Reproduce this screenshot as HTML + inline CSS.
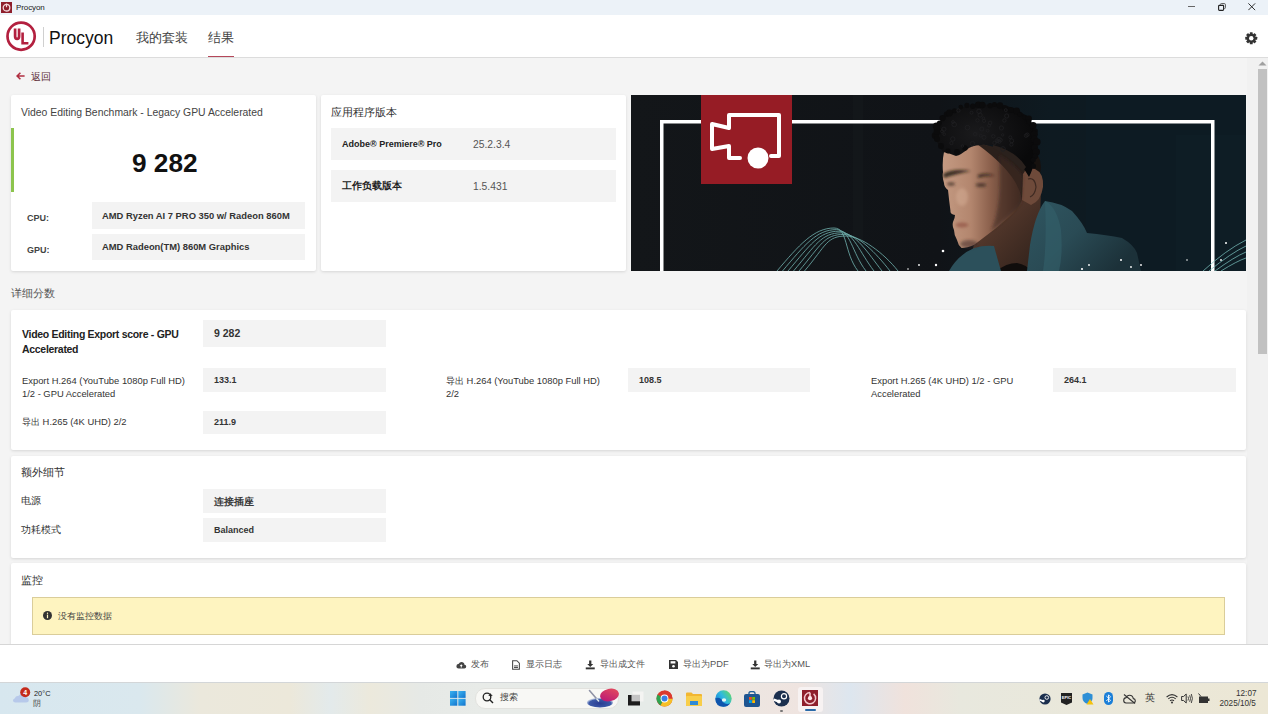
<!DOCTYPE html>
<html><head><meta charset="utf-8">
<style>
*{margin:0;padding:0;box-sizing:border-box}
html,body{width:1268px;height:714px;overflow:hidden;background:#f4f4f4;font-family:"Liberation Sans",sans-serif;color:#333}
.a{position:absolute;white-space:nowrap}
#titlebar{position:absolute;left:0;top:0;width:1268px;height:15px;background:#ecf2f8}
#header{position:absolute;left:0;top:15px;width:1268px;height:43px;background:#fff;border-bottom:1px solid #dcdcdc}
.card{position:absolute;background:#fff;border-radius:2px;box-shadow:0 1px 3px rgba(0,0,0,0.12)}
.vbox{position:absolute;background:#f3f3f3}
.t{position:absolute;white-space:nowrap;line-height:1}
#footer{position:absolute;left:0;top:644px;width:1268px;height:39px;background:#fff;border-top:1px solid #d6d6d6}
#taskbar{position:absolute;left:0;top:682px;width:1268px;height:32px;background:linear-gradient(90deg,#d7e7ef 0px,#dae8ee 140px,#ebe8dc 200px,#ece8da 290px,#e3eaeb 330px,#ece9dc 370px,#e6e9e6 420px,#e8ebe8 480px,#e6ebe8 650px,#ece7e2 720px,#efe4e0 800px,#dde6ef 850px,#f0e2dc 905px,#e8e8de 960px,#ece7d5 1268px);border-top:1px solid #d3d6d8}
</style></head><body>

<div id="titlebar">
  <svg class="a" style="left:1px;top:2px" width="11" height="11" viewBox="0 0 11 11"><rect width="11" height="11" fill="#8e1f2c"/><circle cx="5.5" cy="5.7" r="3.3" fill="none" stroke="#f3d9dc" stroke-width="1.3"/><rect x="4.9" y="1.6" width="1.2" height="3.6" fill="#f3d9dc"/></svg>
  <div class="t" style="left:16px;top:3.7px;font-size:8px;color:#222;letter-spacing:-0.1px">Procyon</div>
  <div class="a" style="left:1188px;top:6px;width:7px;height:1px;background:#666"></div>
  <svg class="a" style="left:1218px;top:3px" width="8" height="8" viewBox="0 0 8 8"><rect x="0.6" y="2.4" width="5" height="5" rx="0.8" fill="none" stroke="#222" stroke-width="1.1"/><path d="M2.4 1.8V1.5Q2.4 0.6 3.3 0.6H6.4Q7.4 0.6 7.4 1.6V4.7Q7.4 5.6 6.4 5.6" fill="none" stroke="#444" stroke-width="0.9"/></svg>
  <svg class="a" style="left:1248px;top:3px" width="7.5" height="7.5" viewBox="0 0 8 8"><path d="M0.4 0.4L7.6 7.6M7.6 0.4L0.4 7.6" stroke="#222" stroke-width="1"/></svg>
</div>

<div id="header">
  <svg class="a" style="left:5px;top:5px" width="32" height="32" viewBox="0 0 32 32"><circle cx="16.1" cy="16.2" r="13.6" fill="none" stroke="#b3203f" stroke-width="2.7"/><path d="M10.1 8.4V16.3Q10.1 18.9 12.1 18.9Q14.1 18.9 14.1 16.3V8.4" fill="none" stroke="#b3203f" stroke-width="2.7"/><path d="M17.6 12.6V23.2H23.4" fill="none" stroke="#b3203f" stroke-width="2.6"/></svg>
  <div class="a" style="left:43px;top:12px;width:1px;height:20px;background:#d0d0d0"></div>
  <div class="t" style="left:49px;top:14.5px;font-size:17.5px;color:#111">Procyon</div>
  <div class="t" style="left:136px;top:17px;font-size:12.5px;color:#444">我的套装</div>
  <div class="t" style="left:208px;top:17px;font-size:12.5px;color:#444">结果</div>
  <div class="a" style="left:208px;top:40.5px;width:26px;height:1.6px;background:#b5475a"></div>
  <svg class="a" style="left:1245px;top:17px" width="12.5" height="12.5" viewBox="0 0 14 14"><g fill="#333"><circle cx="7" cy="7" r="5"/><g id="th"><rect x="5.4" y="0.3" width="3.2" height="3" rx="0.4"/></g><use href="#th" transform="rotate(45 7 7)"/><use href="#th" transform="rotate(90 7 7)"/><use href="#th" transform="rotate(135 7 7)"/><use href="#th" transform="rotate(180 7 7)"/><use href="#th" transform="rotate(225 7 7)"/><use href="#th" transform="rotate(270 7 7)"/><use href="#th" transform="rotate(315 7 7)"/></g><circle cx="7" cy="7" r="2.5" fill="#fff"/></svg>
</div>

<!-- scrollbar -->
<div class="a" style="left:1247px;top:58px;width:21px;height:586px;background:#f1f1f1"></div>
<svg class="a" style="left:1258px;top:61px" width="9" height="5" viewBox="0 0 9 5"><path d="M0.5 4.5L4.5 0.5L8.5 4.5Z" fill="#a0a0a0"/></svg>
<div class="a" style="left:1258px;top:69px;width:9px;height:285px;background:#c1c1c1"></div>

<!-- back -->
<svg class="a" style="left:16px;top:72px" width="9" height="8" viewBox="0 0 9 8"><path d="M4.4 0.7L1.1 4L4.4 7.3M1.3 4H8.6" fill="none" stroke="#b02e40" stroke-width="1.6"/></svg>
<div class="t" style="left:31px;top:72px;font-size:9.6px;color:#5e2f38">返回</div>

<!-- card 1 -->
<div class="card" style="left:11px;top:95px;width:305px;height:176px">
  <div class="t" style="left:10px;top:13px;font-size:10.4px;color:#444">Video Editing Benchmark - Legacy GPU Accelerated</div>
  <div class="a" style="left:0;top:33px;width:3px;height:64px;background:#8cc44d"></div>
  <div class="t" style="left:121px;top:54.5px;font-size:26.2px;font-weight:bold;color:#111">9 282</div>
  <div class="t" style="left:16px;top:119px;font-size:9px;font-weight:bold;color:#444">CPU:</div>
  <div class="t" style="left:16px;top:151px;font-size:9px;font-weight:bold;color:#444">GPU:</div>
  <div class="vbox" style="left:81px;top:107px;width:213px;height:27px"></div>
  <div class="vbox" style="left:81px;top:139px;width:213px;height:26px"></div>
  <div class="t" style="left:91px;top:116px;font-size:9.4px;font-weight:bold;color:#333">AMD Ryzen AI 7 PRO 350 w/ Radeon 860M</div>
  <div class="t" style="left:91px;top:147px;font-size:9.4px;font-weight:bold;color:#333">AMD Radeon(TM) 860M Graphics</div>
</div>

<!-- card 2 -->
<div class="card" style="left:321px;top:95px;width:305px;height:176px">
  <div class="t" style="left:10px;top:12px;font-size:11px;color:#333">应用程序版本</div>
  <div class="vbox" style="left:10px;top:33px;width:285px;height:32px"></div>
  <div class="vbox" style="left:10px;top:75px;width:285px;height:32px"></div>
  <div class="t" style="left:21px;top:45px;font-size:9px;font-weight:bold;color:#222">Adobe® Premiere® Pro</div>
  <div class="t" style="left:152px;top:45px;font-size:10.3px;color:#555">25.2.3.4</div>
  <div class="t" style="left:21px;top:86px;font-size:9.6px;font-weight:bold;color:#222">工作负载版本</div>
  <div class="t" style="left:152px;top:87px;font-size:10.3px;color:#555">1.5.431</div>
</div>

<!-- banner -->
<svg class="a" style="left:631px;top:95px" width="615" height="176" viewBox="0 0 615 176">
<defs>
<linearGradient id="bg" x1="0" y1="0" x2="1" y2="0"><stop offset="0" stop-color="#131619"/><stop offset="0.5" stop-color="#101317"/><stop offset="0.68" stop-color="#0e1a21"/><stop offset="1" stop-color="#0c1a21"/></linearGradient>
<linearGradient id="skin" x1="0" y1="0" x2="1" y2="0"><stop offset="0" stop-color="#c49a82"/><stop offset="0.35" stop-color="#b3866e"/><stop offset="0.6" stop-color="#8a5f4b"/><stop offset="0.85" stop-color="#5a3d30"/><stop offset="1" stop-color="#3a2820"/></linearGradient>
<linearGradient id="hood" x1="0" y1="0" x2="1" y2="0.6"><stop offset="0" stop-color="#2f5661"/><stop offset="0.5" stop-color="#2a4b55"/><stop offset="1" stop-color="#1c3139"/></linearGradient>
<filter id="soft" x="-20%" y="-20%" width="140%" height="140%"><feGaussianBlur stdDeviation="1.6"/></filter><linearGradient id="neckg" x1="0" y1="0" x2="1" y2="1"><stop offset="0" stop-color="#6a4636"/><stop offset="1" stop-color="#2e201a"/></linearGradient><radialGradient id="hairg" cx="0.4" cy="0.4" r="0.6"><stop offset="0" stop-color="#1a1a1c"/><stop offset="1" stop-color="#09090a"/></radialGradient>
</defs>
<rect width="615" height="176" fill="url(#bg)"/>
<rect x="222" y="0" width="10" height="176" fill="#15191c" opacity="0.6"/>
<rect x="455" y="0" width="160" height="176" fill="#0d1b23"/>
<rect x="545" y="40" width="70" height="136" fill="#101e26" opacity="0.7"/>
<!-- frame -->
<rect x="29" y="25" width="3.5" height="151" fill="#fff"/>
<rect x="29" y="25" width="554" height="3.5" fill="#fff"/>
<rect x="580" y="25" width="3.5" height="151" fill="#fff"/>
<!-- waves -->
<g fill="none" stroke="#7cc4c0" stroke-width="0.8" opacity="0.9">
<path d="M146.0 176 C168.0 150 183.0 133.0 203.0 133.0 C217.0 133.0 213.0 158 227.0 176"/>
<path d="M151.5 176 C173.5 150 185.5 134.6 205.5 134.6 C219.5 134.6 221.0 158 235.0 176"/>
<path d="M157.0 176 C179.0 150 188.0 136.2 208.0 136.2 C222.0 136.2 229.0 158 243.0 176"/>
<path d="M162.5 176 C184.5 150 190.5 137.8 210.5 137.8 C224.5 137.8 237.0 158 251.0 176"/>
<path d="M168.0 176 C190.0 150 193.0 139.4 213.0 139.4 C227.0 139.4 245.0 158 259.0 176"/>
<path d="M173.5 176 C195.5 150 195.5 141.0 215.5 141.0 C229.5 141.0 253.0 158 267.0 176"/>
<path d="M572 176 Q595 155 615 145"/>
<path d="M578 176 Q600 158 615 151"/>
<path d="M584 176 Q603 162 615 157"/>
<path d="M590 176 Q606 166 615 163"/>
</g>
<!-- neck -->
<path d="M335 176 L343 150 L385 110 L393 98 L410 96 L408 150 L402 176 Z" fill="url(#neckg)"/>
<path d="M366 176 Q375 168 386 168 Q396 170 400 176 Z" fill="#100d0c"/>
<!-- hoodie -->
<path d="M318 176 Q327 160 343 153 Q353 150 363 151 Q366 162 370 176 Z" fill="#2c505b"/>
<path d="M396 176 L399 150 Q404 119 414 106 Q430 108 441 116 Q452 128 456 138 Q476 140 491 143 Q503 150 506 158 L510 176 Z" fill="url(#hood)"/>
<path d="M414 106 Q426 112 430 135 Q432 160 428 176 L412 176 Q416 150 414 106 Z" fill="#33606b" opacity="0.6"/>
<!-- face -->
<path d="M313 57 Q330 50 350 48 Q375 58 392 79 L391 105 L385 116 Q365 134 343 150 Q336 153 330.6 153 Q327 150 326 145 Q323 140 323 135 Q321 131 322 127 Q324 123 324 120 Q319 119 319.5 116 Q318 105 317 95 Q313 92 313 88 Q311 82 312 77 Q311 66 313 57 Z" fill="url(#skin)"/>
<ellipse cx="401" cy="72" rx="9" ry="15" fill="#17120f"/>
<path d="M346 49 Q372 50 396 70 L400 84 L391 104 Q386 78 346 49Z" fill="#2b201b"/>
<path d="M392 79 Q396 72 404 74 Q413 78 412 92 Q410 106 400 110 L391 105 Z" fill="#6e4a3a"/>
<path d="M397 84 Q404 82 405 92 Q404 100 399 102" stroke="#3e2a22" stroke-width="1.2" fill="none"/>
<!-- face shading -->
<g filter="url(#soft)">
<path d="M368 60 Q385 70 392 82 L390 108 Q375 125 360 136 Q372 110 368 60 Z" fill="#3e2a22" opacity="0.55"/>
<path d="M312 79 Q322 73 340 76 Q328 78 313 83Z" fill="#22160f" opacity="0.85"/>
<path d="M347 80 Q356 77 364 81 Q356 80 347 83Z" fill="#22160f" opacity="0.8"/>
<ellipse cx="320" cy="89" rx="4" ry="1.7" fill="#3a2820" opacity="0.75"/>
<ellipse cx="350" cy="90" rx="5.5" ry="2" fill="#3a2820" opacity="0.75"/>
<ellipse cx="331" cy="102" rx="6" ry="9" fill="#e2bca4" opacity="0.35"/>
<ellipse cx="331" cy="130" rx="6.5" ry="2.6" fill="#9a5e4e" opacity="0.9"/>
<ellipse cx="338" cy="149" rx="9" ry="4" fill="#3a2620" opacity="0.5"/>
</g>
<!-- hair -->
<path d="M304 40 Q305 24 322 15 Q345 8 372 10 Q395 15 402 30 Q407 45 404 62 Q402 75 398 82 Q392 72 390 70 Q378 56 362 50 Q345 49 338 53 Q330 60 325 61 Q318 58 312 57 Q306 50 304 40 Z" fill="url(#hairg)"/>
<path d="M362 50 Q385 56 395 72 L392 76 Q378 62 362 53 Z" fill="#2a211d"/><g fill="#0b0b0c"><circle cx="304.3" cy="40.6" r="3.5"/><circle cx="306.4" cy="36.3" r="3.7"/><circle cx="305.5" cy="31.3" r="3.7"/><circle cx="308.4" cy="28.0" r="2.5"/><circle cx="311.6" cy="23.1" r="3.1"/><circle cx="315.4" cy="19.2" r="2.6"/><circle cx="318.5" cy="18.0" r="3.4"/><circle cx="323.5" cy="15.7" r="2.5"/><circle cx="329.8" cy="12.1" r="2.3"/><circle cx="335.9" cy="10.3" r="2.6"/><circle cx="341.8" cy="11.2" r="2.7"/><circle cx="347.3" cy="9.8" r="3.3"/><circle cx="351.3" cy="10.1" r="3.3"/><circle cx="359.1" cy="10.6" r="2.7"/><circle cx="363.5" cy="9.5" r="2.5"/><circle cx="369.0" cy="10.5" r="3.2"/><circle cx="374.1" cy="13.1" r="2.8"/><circle cx="380.1" cy="15.1" r="3.0"/><circle cx="385.6" cy="16.0" r="3.4"/><circle cx="388.6" cy="19.8" r="2.3"/><circle cx="393.9" cy="22.1" r="2.3"/><circle cx="397.7" cy="23.7" r="3.2"/><circle cx="397.8" cy="26.5" r="2.6"/><circle cx="402.1" cy="30.5" r="3.4"/><circle cx="404.0" cy="36.1" r="2.8"/><circle cx="403.3" cy="39.3" r="3.5"/><circle cx="403.4" cy="44.2" r="3.5"/><circle cx="405.9" cy="46.9" r="3.7"/><circle cx="403.7" cy="52.2" r="3.2"/><circle cx="405.3" cy="56.9" r="3.7"/><circle cx="404.1" cy="61.5" r="2.8"/><circle cx="402.2" cy="64.9" r="2.5"/><circle cx="402.5" cy="71.1" r="2.5"/><circle cx="306" cy="44" r="3.0"/><circle cx="310" cy="51" r="2.9"/><circle cx="317" cy="56" r="2.5"/><circle cx="326" cy="57" r="2.9"/><circle cx="334" cy="53" r="2.7"/></g><g><circle cx="358.0" cy="30.6" r="1.5" fill="none" stroke="#1f1f22" stroke-width="0.8"/><circle cx="363.5" cy="47.9" r="1.7" fill="none" stroke="#1f1f22" stroke-width="0.8"/><circle cx="348.0" cy="16.3" r="2.2" fill="none" stroke="#1f1f22" stroke-width="0.8"/><circle cx="312.9" cy="34.2" r="2.1" fill="none" stroke="#1f1f22" stroke-width="0.8"/><circle cx="321.8" cy="44.0" r="2.2" fill="none" stroke="#1f1f22" stroke-width="0.8"/><circle cx="366.7" cy="46.3" r="1.3" fill="none" stroke="#1f1f22" stroke-width="0.8"/><circle cx="349.1" cy="20.1" r="2.1" fill="none" stroke="#1f1f22" stroke-width="0.8"/><circle cx="336.5" cy="32.6" r="2.3" fill="none" stroke="#1f1f22" stroke-width="0.8"/><circle cx="350.8" cy="34.0" r="2.0" fill="none" stroke="#1f1f22" stroke-width="0.8"/><circle cx="353.1" cy="25.9" r="1.6" fill="none" stroke="#1f1f22" stroke-width="0.8"/><circle cx="323.2" cy="29.5" r="2.3" fill="none" stroke="#1f1f22" stroke-width="0.8"/><circle cx="396.4" cy="39.7" r="1.7" fill="none" stroke="#1f1f22" stroke-width="0.8"/><circle cx="340.5" cy="17.7" r="1.5" fill="none" stroke="#1f1f22" stroke-width="0.8"/><circle cx="380.4" cy="49.6" r="1.6" fill="none" stroke="#1f1f22" stroke-width="0.8"/><circle cx="380.7" cy="45.8" r="2.0" fill="none" stroke="#1f1f22" stroke-width="0.8"/><circle cx="369.8" cy="45.1" r="1.6" fill="none" stroke="#1f1f22" stroke-width="0.8"/><circle cx="373.4" cy="25.5" r="1.7" fill="none" stroke="#1f1f22" stroke-width="0.8"/><circle cx="379.3" cy="42.3" r="1.5" fill="none" stroke="#1f1f22" stroke-width="0.8"/><circle cx="395.1" cy="40.6" r="1.8" fill="none" stroke="#1f1f22" stroke-width="0.8"/><circle cx="311.0" cy="36.4" r="1.5" fill="none" stroke="#1f1f22" stroke-width="0.8"/><circle cx="370.4" cy="33.0" r="2.1" fill="none" stroke="#1f1f22" stroke-width="0.8"/><circle cx="368.3" cy="46.7" r="1.6" fill="none" stroke="#1f1f22" stroke-width="0.8"/><circle cx="368.0" cy="44.3" r="2.1" fill="none" stroke="#1f1f22" stroke-width="0.8"/><circle cx="341.5" cy="48.6" r="2.2" fill="none" stroke="#1f1f22" stroke-width="0.8"/><circle cx="372.0" cy="54.0" r="2.3" fill="none" stroke="#1f1f22" stroke-width="0.8"/><circle cx="356.6" cy="35.7" r="1.4" fill="none" stroke="#1f1f22" stroke-width="0.8"/><circle cx="353.0" cy="42.3" r="2.0" fill="none" stroke="#1f1f22" stroke-width="0.8"/><circle cx="375.7" cy="21.0" r="2.1" fill="none" stroke="#1f1f22" stroke-width="0.8"/><circle cx="362.3" cy="41.3" r="1.7" fill="none" stroke="#1f1f22" stroke-width="0.8"/><circle cx="366.1" cy="45.8" r="1.9" fill="none" stroke="#1f1f22" stroke-width="0.8"/><circle cx="374.8" cy="15.1" r="1.4" fill="none" stroke="#1f1f22" stroke-width="0.8"/><circle cx="349.7" cy="40.7" r="1.4" fill="none" stroke="#1f1f22" stroke-width="0.8"/><circle cx="371.7" cy="39.9" r="1.2" fill="none" stroke="#1f1f22" stroke-width="0.8"/><circle cx="352.4" cy="23.3" r="1.3" fill="none" stroke="#1f1f22" stroke-width="0.8"/><circle cx="322.0" cy="27.0" r="1.4" fill="none" stroke="#1f1f22" stroke-width="0.8"/><circle cx="327.4" cy="15.5" r="1.7" fill="none" stroke="#1f1f22" stroke-width="0.8"/><circle cx="344.2" cy="39.1" r="1.8" fill="none" stroke="#1f1f22" stroke-width="0.8"/><circle cx="331.4" cy="51.0" r="1.2" fill="none" stroke="#1f1f22" stroke-width="0.8"/><circle cx="346.5" cy="25.4" r="1.7" fill="none" stroke="#1f1f22" stroke-width="0.8"/><circle cx="320.4" cy="48.1" r="1.6" fill="none" stroke="#1f1f22" stroke-width="0.8"/><circle cx="313.2" cy="39.2" r="1.3" fill="none" stroke="#1f1f22" stroke-width="0.8"/><circle cx="359.1" cy="27.9" r="1.8" fill="none" stroke="#1f1f22" stroke-width="0.8"/></g>
<!-- red square -->
<rect x="70" y="0" width="91" height="89" fill="#961c25"/>
<g fill="none" stroke="#fff" stroke-width="4" stroke-linejoin="round" stroke-linecap="round">
<path d="M109 63 H98 V51 L81 54 V29 L98 33 V20 H148 V61 H140"/>
</g>
<circle cx="127" cy="63" r="10.5" fill="#fff"/>
<!-- sparkles -->
<g fill="#fff">
<circle cx="312" cy="156" r="1.3"/><circle cx="305" cy="170" r="1.2"/><circle cx="288" cy="170" r="0.9"/><circle cx="277" cy="174" r="0.8"/>
<circle cx="451" cy="174" r="1.1"/><circle cx="458" cy="170" r="0.9"/><circle cx="490" cy="165" r="1"/><circle cx="500" cy="172" r="0.9"/>
<circle cx="510" cy="170" r="0.9"/><circle cx="595" cy="148" r="1"/><circle cx="590" cy="165" r="0.9"/><circle cx="556" cy="165" r="0.8"/>
</g>
</svg>

<!-- details title -->
<div class="t" style="left:11px;top:288px;font-size:11px;color:#555">详细分数</div>

<!-- details card -->
<div class="card" style="left:11px;top:310px;width:1235px;height:140px">
  <div class="t" style="left:11px;top:16.5px;font-size:10.5px;font-weight:bold;color:#222;line-height:15.5px;letter-spacing:-0.3px">Video Editing Export score - GPU<br>Accelerated</div>
  <div class="vbox" style="left:192px;top:10px;width:183px;height:27px"></div>
  <div class="t" style="left:203px;top:18px;font-size:10.5px;font-weight:bold;color:#333">9 282</div>

  <div class="t" style="left:11px;top:64px;font-size:9.4px;color:#333;line-height:13px">Export H.264 (YouTube 1080p Full HD)<br>1/2 - GPU Accelerated</div>
  <div class="vbox" style="left:192px;top:58px;width:183px;height:24px"></div>
  <div class="t" style="left:203px;top:66px;font-size:9px;font-weight:bold;color:#333">133.1</div>

  <div class="t" style="left:435px;top:64px;font-size:9.4px;color:#333;line-height:13px">导出 H.264 (YouTube 1080p Full HD)<br>2/2</div>
  <div class="vbox" style="left:617px;top:58px;width:182px;height:24px"></div>
  <div class="t" style="left:628px;top:66px;font-size:9px;font-weight:bold;color:#333">108.5</div>

  <div class="t" style="left:860px;top:64px;font-size:9.4px;color:#333;line-height:13px">Export H.265 (4K UHD) 1/2 - GPU<br>Accelerated</div>
  <div class="vbox" style="left:1042px;top:58px;width:183px;height:24px"></div>
  <div class="t" style="left:1053px;top:66px;font-size:9px;font-weight:bold;color:#333">264.1</div>

  <div class="t" style="left:11px;top:107px;font-size:9.4px;color:#333">导出 H.265 (4K UHD) 2/2</div>
  <div class="vbox" style="left:192px;top:101px;width:183px;height:23px"></div>
  <div class="t" style="left:203px;top:108px;font-size:9px;font-weight:bold;color:#333">211.9</div>
</div>

<!-- extra card -->
<div class="card" style="left:11px;top:456px;width:1235px;height:102px">
  <div class="t" style="left:10px;top:11px;font-size:10.5px;color:#333">额外细节</div>
  <div class="t" style="left:10px;top:40px;font-size:9.6px;color:#333">电源</div>
  <div class="vbox" style="left:192px;top:33px;width:183px;height:24px"></div>
  <div class="t" style="left:203px;top:40.5px;font-size:9.6px;font-weight:bold;color:#3a3a3a">连接插座</div>
  <div class="t" style="left:10px;top:69px;font-size:9.6px;color:#333">功耗模式</div>
  <div class="vbox" style="left:192px;top:62px;width:183px;height:24px"></div>
  <div class="t" style="left:203px;top:70px;font-size:9px;font-weight:bold;color:#333">Balanced</div>
</div>

<!-- monitor card -->
<div class="card" style="left:11px;top:563px;width:1235px;height:90px">
  <div class="t" style="left:10px;top:12px;font-size:11px;color:#333">监控</div>
  <div class="a" style="left:21px;top:34px;width:1193px;height:38px;background:#fef4c0;border:1px solid #dacd9a"></div>
  <svg class="a" style="left:32px;top:48px" width="9" height="9" viewBox="0 0 9 9"><circle cx="4.5" cy="4.5" r="4.5" fill="#333"/><rect x="3.9" y="3.6" width="1.2" height="3.6" fill="#fef4c1"/><circle cx="4.5" cy="2.3" r="0.7" fill="#fef4c1"/></svg>
  <div class="t" style="left:47px;top:48px;font-size:9.4px;color:#444">没有监控数据</div>
</div>

<!-- footer -->
<div id="footer">
  <svg class="a" style="left:456px;top:16px" width="10.5" height="8" viewBox="0 0 12 9"><path d="M3 8.5H9.5Q11.7 8.5 11.7 6.3Q11.7 4.3 9.7 4.1Q9.3 1 6.3 1Q4 1 3.2 3.2Q0.4 3.4 0.4 6Q0.4 8.5 3 8.5Z" fill="#444"/><path d="M6 3.6L4.3 5.6H5.4V7.4H6.6V5.6H7.7Z" fill="#fff"/></svg>
  <div class="t" style="left:471px;top:14.8px;font-size:9.3px;color:#555">发布</div>
  <svg class="a" style="left:512px;top:15px" width="8" height="10" viewBox="0 0 9 11"><path d="M0.7 0.7H5.5L8.3 3.5V10.3H0.7Z" fill="none" stroke="#444" stroke-width="1.2"/><rect x="2.3" y="6" width="4.4" height="1.1" fill="#444"/><rect x="2.3" y="7.8" width="4.4" height="1.1" fill="#444"/></svg>
  <div class="t" style="left:526px;top:14.8px;font-size:9.3px;color:#555">显示日志</div>
  <svg class="a" style="left:585px;top:15px" width="10.5" height="9.5" viewBox="0 0 11 11"><path d="M4.2 0.5H6.8V4.6H9L5.5 8.2L2 4.6H4.2Z" fill="#333"/><rect x="0.3" y="8.6" width="10.4" height="2.2" fill="#333"/></svg>
  <div class="t" style="left:600px;top:14.8px;font-size:9.3px;color:#555">导出成文件</div>
  <svg class="a" style="left:669px;top:15px" width="9" height="9" viewBox="0 0 9 9"><path d="M0 0H7L9 2V9H0Z" fill="#333"/><rect x="1.6" y="1.2" width="4.8" height="2.3" fill="#fff"/><circle cx="4.5" cy="6.2" r="1.3" fill="#fff"/></svg>
  <div class="t" style="left:683px;top:14.8px;font-size:9.3px;color:#555">导出为PDF</div>
  <svg class="a" style="left:750px;top:15px" width="10.5" height="9.5" viewBox="0 0 11 11"><path d="M4.2 0.5H6.8V4.6H9L5.5 8.2L2 4.6H4.2Z" fill="#333"/><rect x="0.3" y="8.6" width="10.4" height="2.2" fill="#333"/></svg>
  <div class="t" style="left:764px;top:14.8px;font-size:9.3px;color:#555">导出为XML</div>
</div>

<!-- taskbar -->
<div id="taskbar">
  <svg class="a" style="left:12px;top:4px" width="20" height="17" viewBox="0 0 20 17"><path d="M3.5 15.5H14Q16.8 15.5 16.8 13Q16.8 10.6 14.5 10.2Q14 6.5 10.5 6.5Q8 6.5 6.8 8.8Q3.5 8.6 2.6 11.4Q1 12 1 13.6Q1 15.5 3.5 15.5Z" fill="#b7c9ea"/><circle cx="13.2" cy="5.2" r="5" fill="#c42b1c"/><text x="13.2" y="7.9" font-size="7" font-family="Liberation Sans" font-weight="bold" fill="#fff" text-anchor="middle">4</text></svg>
  <div class="t" style="left:34px;top:6.5px;font-size:7.4px;color:#222">20°C</div>
  <div class="t" style="left:33px;top:16.5px;font-size:8px;color:#555">阴</div>

  <svg class="a" style="left:450px;top:8px" width="16" height="15" viewBox="0 0 16 15"><defs><linearGradient id="wg" x1="0" y1="0" x2="1" y2="1"><stop offset="0" stop-color="#3bb4f2"/><stop offset="1" stop-color="#1273cc"/></linearGradient></defs><rect x="0" y="0" width="7.3" height="6.9" fill="url(#wg)"/><rect x="8.3" y="0" width="7.3" height="6.9" fill="url(#wg)"/><rect x="0" y="7.8" width="7.3" height="6.9" fill="url(#wg)"/><rect x="8.3" y="7.8" width="7.3" height="6.9" fill="url(#wg)"/></svg>
  <div class="a" style="left:475px;top:5px;width:144px;height:20.5px;border-radius:10px;background:#f8f8f5;border:1px solid #e2e2de"></div>
  <svg class="a" style="left:482px;top:9px" width="12" height="12" viewBox="0 0 12 12"><circle cx="5" cy="5" r="3.8" fill="none" stroke="#222" stroke-width="1.3"/><path d="M7.8 7.8L11 11" stroke="#222" stroke-width="1.4"/><path d="M8.5 1L9.2 2.6L10.8 3.3L9.2 4L8.5 5.6L7.8 4L6.2 3.3L7.8 2.6Z" fill="#222"/></svg>
  <div class="t" style="left:500px;top:10px;font-size:9px;color:#444">搜索</div>
  <svg class="a" style="left:586px;top:5px" width="33" height="20" viewBox="0 0 33 20"><defs><linearGradient id="mg" x1="0" y1="1" x2="1" y2="0"><stop offset="0" stop-color="#b5127a"/><stop offset="1" stop-color="#e8505a"/></linearGradient><radialGradient id="ng" cx="0.5" cy="0.6" r="0.6"><stop offset="0" stop-color="#2a3c92"/><stop offset="0.7" stop-color="#3d5aa8"/><stop offset="1" stop-color="#c9d6ee" stop-opacity="0.3"/></radialGradient></defs><ellipse cx="14" cy="14.5" rx="13" ry="5" fill="url(#ng)"/><ellipse cx="23.5" cy="7" rx="9.5" ry="6.2" transform="rotate(-12 23.5 7)" fill="url(#mg)"/><path d="M3.5 2.5L12.5 13" stroke="#8f93a6" stroke-width="1.6" stroke-linecap="round"/><path d="M10.5 10.5L13 13.3" stroke="#d9ecf6" stroke-width="1.2"/></svg>

  <svg class="a" style="left:628px;top:8px" width="16" height="15" viewBox="0 0 16 15"><rect x="4.5" y="0.5" width="11" height="10" fill="#f4f4f2"/><rect x="0" y="4" width="12" height="10.5" fill="#1c1c1c"/><rect x="3.5" y="3.8" width="8.5" height="6.5" fill="#c4c4c4"/></svg>

  <svg class="a" style="left:656px;top:7px" width="17" height="17" viewBox="0 0 17 17"><circle cx="8.5" cy="8.5" r="8" fill="#db3a2f"/><path d="M8.5 8.5L1.57 4.5A8 8 0 0 0 4.5 15.43Z" fill="#2ea44f"/><path d="M8.5 8.5L4.5 15.43A8 8 0 0 0 16.5 8.5Z" fill="#f6c026"/><path d="M8.5 8.5 L16.5 8.5 A8 8 0 0 0 8.5 0.5 L1.57 4.5Z" fill="#db3a2f"/><circle cx="8.5" cy="8.5" r="3.9" fill="#fff"/><circle cx="8.5" cy="8.5" r="3" fill="#3a7fe6"/></svg>

  <svg class="a" style="left:686px;top:9px" width="16" height="14" viewBox="0 0 16 14"><path d="M0 1.5Q0 0.5 1 0.5H5.5L7 2H15Q16 2 16 3V13Q16 14 15 14H1Q0 14 0 13Z" fill="#f2b631"/><rect x="0" y="4" width="16" height="10" rx="1" fill="#f8ce4a"/><rect x="4" y="9" width="8" height="4" fill="#2f8ad6"/></svg>

  <svg class="a" style="left:714.5px;top:6.5px" width="17" height="17" viewBox="0 0 17 17"><defs><linearGradient id="eg" x1="1" y1="0.2" x2="0" y2="0.9"><stop offset="0" stop-color="#62d86a"/><stop offset="0.45" stop-color="#2fb9e0"/><stop offset="1" stop-color="#1a74d2"/></linearGradient></defs><circle cx="8.5" cy="8.5" r="8.2" fill="url(#eg)"/><path d="M0.4 8.5Q0.4 16.7 8.5 16.7Q12.8 16.7 15.2 13.2Q12.5 14.4 10 13.6Q7 12.6 6.8 9.8Q4 6.5 0.4 8.5Z" fill="#0f55ad"/><ellipse cx="9" cy="10" rx="2.2" ry="1.7" fill="#e3f6f3"/></svg>

  <svg class="a" style="left:744px;top:8px" width="16" height="16" viewBox="0 0 16 16"><path d="M5 3V2Q5 0.5 8 0.5Q11 0.5 11 2V3" fill="none" stroke="#1d5d96" stroke-width="1.3"/><rect x="0" y="3" width="16" height="13" rx="2" fill="#1e5591"/><rect x="5" y="6" width="2.8" height="2.8" fill="#f25022"/><rect x="8.2" y="6" width="2.8" height="2.8" fill="#7fba00"/><rect x="5" y="9.2" width="2.8" height="2.8" fill="#00a4ef"/><rect x="8.2" y="9.2" width="2.8" height="2.8" fill="#ffb900"/></svg>

  <svg class="a" style="left:773px;top:7px" width="17" height="17" viewBox="0 0 17 17"><circle cx="8.5" cy="8.5" r="8" fill="#1b2f4e"/><circle cx="11" cy="6.3" r="2.6" fill="none" stroke="#fff" stroke-width="1.2"/><path d="M0.8 9.6L6 11.6" stroke="#fff" stroke-width="2.2"/><circle cx="6" cy="11.5" r="2" fill="#fff"/></svg>
  <div class="a" style="left:780px;top:27px;width:3px;height:2px;border-radius:1px;background:#777"></div>

  <div class="a" style="left:798px;top:3.5px;width:25px;height:25px;border-radius:3px;background:#f7f2f2"></div>
  <svg class="a" style="left:802px;top:7px" width="16" height="16" viewBox="0 0 16 16"><rect width="16" height="16" fill="#8e1f2c"/><path d="M8 2.6A5.6 5.6 0 1 0 11.6 3.9" fill="none" stroke="#f4c9cf" stroke-width="1.5"/><rect x="7.2" y="2.6" width="1.6" height="5" fill="#f4c9cf"/><circle cx="8" cy="8.2" r="2.1" fill="#fde8ea"/></svg>
  <div class="a" style="left:805px;top:26px;width:11px;height:2px;border-radius:1px;background:#2a6aa8"></div>

  <svg class="a" style="left:1039px;top:10px" width="12" height="12" viewBox="0 0 12 12"><circle cx="6" cy="6" r="5.6" fill="#1b2f4e"/><circle cx="7.8" cy="4.5" r="1.8" fill="none" stroke="#fff" stroke-width="0.9"/><path d="M0.5 6.8L4.2 8.2" stroke="#fff" stroke-width="1.6"/><circle cx="4.3" cy="8.1" r="1.4" fill="#fff"/></svg>
  <svg class="a" style="left:1061px;top:10px" width="11" height="12" viewBox="0 0 11 12"><path d="M0 0H11V9.5L5.5 12L0 9.5Z" fill="#222"/><text x="5.5" y="5.5" font-size="4" font-family="Liberation Sans" font-weight="bold" fill="#fff" text-anchor="middle">EPIC</text></svg>
  <svg class="a" style="left:1082px;top:9px" width="12" height="13" viewBox="0 0 12 13"><path d="M5.5 0.5L10.5 2.5V6Q10.5 10 5.5 12Q0.5 10 0.5 6V2.5Z" fill="#2e8fd6"/><path d="M8 7L11.5 12.5H4.5Z" fill="#f4c20d"/></svg>
  <svg class="a" style="left:1104px;top:9px" width="9" height="13" viewBox="0 0 9 13"><rect x="0" y="0" width="9" height="13" rx="4.5" fill="#1a7fd8"/><path d="M2.3 4L6.5 8.2L4.5 10.2V2.8L6.5 4.8L2.3 9" fill="none" stroke="#fff" stroke-width="0.9"/></svg>
  <svg class="a" style="left:1123px;top:11px" width="13" height="10" viewBox="0 0 13 10"><path d="M3 9H10Q12.3 9 12.3 6.8Q12.3 4.8 10.3 4.6Q9.8 1.2 6.5 1.2Q4 1.2 3.2 3.6Q0.7 3.9 0.7 6.3Q0.7 9 3 9Z" fill="none" stroke="#333" stroke-width="1.1"/><path d="M1 0.5L12 9.5" stroke="#333" stroke-width="1.1"/></svg>
  <div class="t" style="left:1145px;top:10px;font-size:10px;color:#333">英</div>
  <svg class="a" style="left:1166px;top:10px" width="12" height="11" viewBox="0 0 12 11"><path d="M0.6 4Q6 -0.8 11.4 4" fill="none" stroke="#333" stroke-width="1.1"/><path d="M2.3 5.9Q6 2.6 9.7 5.9" fill="none" stroke="#333" stroke-width="1.1"/><path d="M4 7.8Q6 6.2 8 7.8" fill="none" stroke="#333" stroke-width="1.1"/><circle cx="6" cy="9.6" r="1" fill="#333"/></svg>
  <svg class="a" style="left:1181px;top:10px" width="12" height="11" viewBox="0 0 12 11"><path d="M0.6 3.5H2.6L5.2 1V10L2.6 7.5H0.6Z" fill="none" stroke="#333" stroke-width="1"/><path d="M7 3.5Q8 5.5 7 7.5M8.7 2.2Q10.3 5.5 8.7 8.8M10.3 1Q12.5 5.5 10.3 10" fill="none" stroke="#333" stroke-width="0.9"/></svg>
  <svg class="a" style="left:1198px;top:10px" width="12" height="11" viewBox="0 0 12 11"><rect x="1" y="3.5" width="9" height="6.5" fill="#333"/><rect x="10" y="5.5" width="1.5" height="2.5" fill="#333"/><path d="M0.5 0.5L3 3.5" stroke="#333" stroke-width="1"/></svg>
  <div class="t" style="left:1236px;top:6.5px;font-size:8.2px;color:#333">12:07</div>
  <div class="t" style="left:1219.5px;top:16.5px;font-size:8.2px;color:#333">2025/10/5</div>
</div>

</body></html>
